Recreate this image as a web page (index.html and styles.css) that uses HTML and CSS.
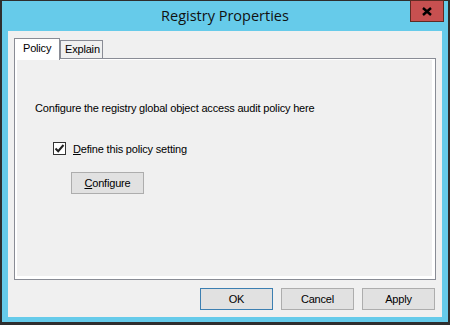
FILE: index.html
```html
<!DOCTYPE html>
<html lang="en">
<head>
  <meta charset="UTF-8" />
  <title>Registry Properties</title>
  <link rel="stylesheet" href="styles.css">
</head>
<body>

  <div class="window">
    <div class="titlebar">Registry Properties</div>
    <div class="close-btn">
      <svg width="10" height="9" viewBox="0 0 10 9">
        <path d="M1 1 L9 8 M9 1 L1 8" stroke="#000" stroke-width="2.4" fill="none"/>
      </svg>
    </div>

    <div class="client">
      <div class="tabs">
        <div class="tab active">Policy</div>
        <div class="tab">Explain</div>
      </div>

      <div class="panel">
        <div class="page">
          <p class="intro">Configure the registry global object access audit policy here</p>

          <label class="check-row">
            <span class="checkbox">
              <svg width="11" height="11" viewBox="0 0 11 11">
                <path d="M1.5 5.5 L4.2 8.2 L9.5 2" stroke="#222" stroke-width="2" fill="none"/>
              </svg>
            </span>
            <span><u>D</u>efine this policy setting</span>
          </label>

          <button class="btn configure"><u>C</u>onfigure</button>
        </div>
      </div>

      <div class="actions">
        <button class="btn default">OK</button>
        <button class="btn">Cancel</button>
        <button class="btn">Apply</button>
      </div>
    </div>
  </div>

</body>
</html>
```

FILE: styles.css
```css
body {
  margin: 0;
  font-family: "Liberation Sans", Arial, sans-serif;
  font-size: 11px;
  letter-spacing: -0.18px;
  color: #000;
}
.window {
  position: relative;
  width: 450px;
  height: 325px;
  box-sizing: border-box;
  border-style: solid;
  border-color: #2e2e2e;
  border-width: 1px 2px 3px 2px;
  background: #66cbea;
  padding: 0 6px 5px 6px;
  display: flex;
  flex-direction: column;
}
.titlebar {
  height: 30px;
  line-height: 30px;
  text-align: center;
  font-family: "Open Sans", sans-serif;
  font-size: 14.5px;
  letter-spacing: 0;
  color: #111;
}
.close-btn {
  position: absolute;
  top: -1px;
  right: 4px;
  width: 32px;
  height: 20px;
  background: #c75050;
  border: 1px solid #5e2b24;
  display: flex;
  align-items: center;
  justify-content: center;
}
.client {
  flex: 1;
  background: #f0f0f0;
  padding: 7px 6px 7px 6px;
  display: flex;
  flex-direction: column;
}
.tabs {
  display: flex;
  align-items: flex-end;
  height: 20px;
}
.tab {
  box-sizing: border-box;
  height: 18px;
  line-height: 16px;
  width: 43px;
  padding-left: 4px;
  border: 1px solid #898c95;
  border-bottom: none;
  background: #f0f0f0;
}
.tab.active {
  position: relative;
  z-index: 1;
  height: 22px;
  width: 46px;
  margin-bottom: -2px;
  padding-left: 8px;
  line-height: 19px;
  background: #fff;
}
.panel {
  height: 222px;
  box-sizing: border-box;
  border: 1px solid #898c95;
  background: #fff;
  padding: 1px 3px 3px 2px;
}
.page {
  height: 100%;
  background: #f0f0f0;
  padding: 42px 0 0 18px;
  box-sizing: border-box;
}
.intro {
  margin: 0;
  line-height: 13px;
}
.check-row {
  display: flex;
  align-items: center;
  margin: 27px 0 0 18px;
  height: 13px;
}
.checkbox {
  box-sizing: border-box;
  width: 13px;
  height: 13px;
  border: 1px solid #333;
  background: #fff;
  margin-right: 7px;
  display: flex;
  align-items: center;
  justify-content: center;
}
.btn {
  box-sizing: border-box;
  width: 73px;
  height: 22px;
  padding: 0;
  font-family: "Liberation Sans", Arial, sans-serif;
  font-size: 11px;
  letter-spacing: -0.18px;
  color: #000;
  background: #e1e1e1;
  border: 1px solid #adadad;
}
.btn.default {
  border-color: #3c7fb1;
}
.configure {
  display: block;
  margin: 17px 0 0 36px;
}
.actions {
  display: flex;
  justify-content: flex-end;
  gap: 8px;
  margin-top: 8px;
  padding-right: 1px;
}
```
